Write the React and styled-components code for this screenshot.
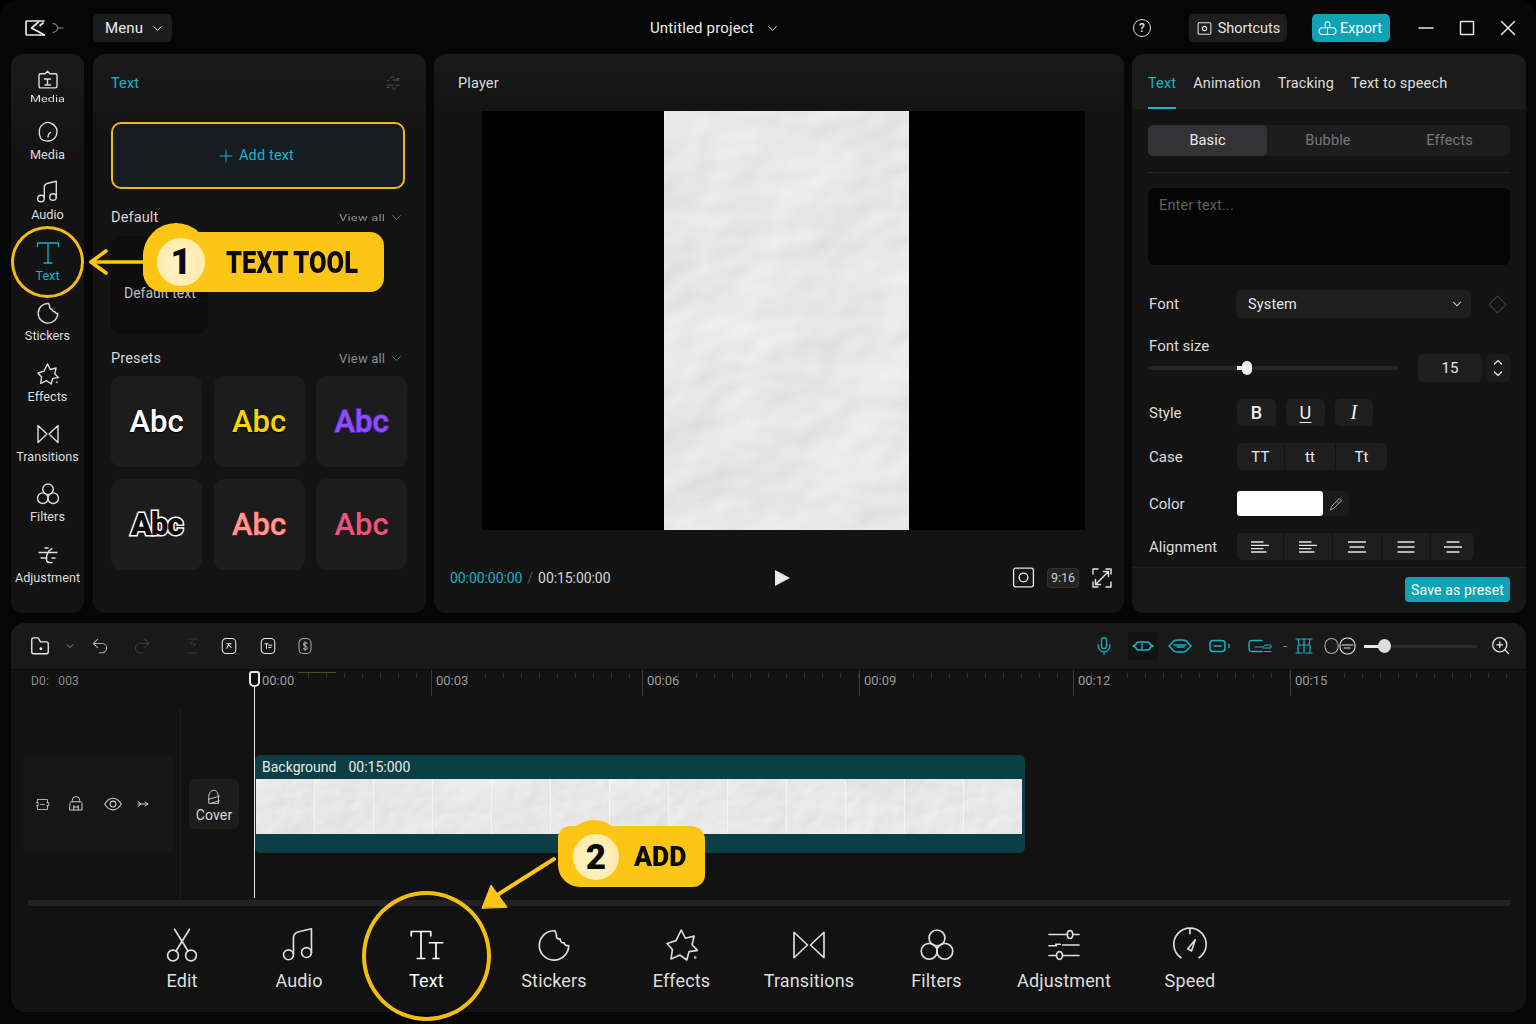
import { createGlobalStyle } from "styled-components";
import styled from "styled-components";
import { Mic, Undo2, Redo2 } from "lucide-react";

const GlobalStyle = createGlobalStyle`
  * { box-sizing: border-box; }
  html, body { margin: 0; padding: 0; background: #000; }
  body { font-family: Roboto, "Liberation Sans", sans-serif; color: #e6e6e6; }
`;

const CYAN = "#12b5c9";
const YELLOW = "#fdc615";

const Svg = ({ size = 24, w, h, color = "currentColor", sw = 1.6, vb = "0 0 24 24", children }) => (
  <svg
    width={w || size}
    height={h || size}
    viewBox={vb}
    fill="none"
    stroke={color}
    strokeWidth={sw}
    strokeLinecap="round"
    strokeLinejoin="round"
  >
    {children}
  </svg>
);

const icons = {
  folderTree: (
    <>
      <path d="M3 7.500c0-1 .7-1.700 1.700-1.700H9l2.500-2.500 2.500 2.500h5.300c1 0 1.700.7 1.700 1.700v10.700c0 1-.7 1.700-1.700 1.700H4.700c-1 0-1.700-.7-1.700-1.700z" />
      <path d="M8.500 11h6M11.500 11v6M9 17h5.500" />
    </>
  ),
  blob: (
    <>
      <path d="M9 3c2-1 4.500-.5 6.500.5 3 1.500 5.500 3.500 5.500 8 0 5-3 9.500-9 9.500-3 0-6-.5-7.500-3-1-2-1.500-5.500-1-8.500.4-2.500 3-5.200 5.500-6.500z" />
      <path d="M12 17c0-2 .6-3.500 2.500-4.500" />
    </>
  ),
  music: (
    <>
      <path d="M8.300 18V7.200c0-2 1.500-3.500 3.500-4l8.500-2v16" />
      <circle cx="5" cy="18.500" r="3.300" />
      <circle cx="17" cy="17" r="3.300" />
    </>
  ),
  serifT: (
    <>
      <path d="M1.500 5.500V2h21v3.500M12 2v20M8 22h8" />
    </>
  ),
  sticker: (
    <path d="M12.500 2.500a9.800 9.800 0 1 0 9.300 9.800c-1.500.5-2.800-.2-3-1.700-1.600.2-2.800-1-2.600-2.500-1.800.1-3-1-2.600-2.700-.1-.8-.3-1.900-1.100-2.900z" />
  ),
  star: (
    <>
      <path d="M11.500 2l2.800 5.500 5.800-1.500-1.400 5.800 3.600 3.800-5.600.8-1.500 5.600-4.500-3.300-6 2.600.9-6.300L2 11l6-1.900z" />
      <circle cx="20.800" cy="20.300" r=".3" />
    </>
  ),
  bowtie: <path d="M2 3.500v17l9-8.500zM22 3.500v17L13 12z" />,
  filters: (
    <>
      <circle cx="12" cy="7.300" r="5.300" />
      <circle cx="6.800" cy="16.200" r="5.300" />
      <circle cx="17.200" cy="16.200" r="5.300" />
    </>
  ),
  squiggle: (
    <path d="M3 9.500h18M5 15h6M16 5.500l-3 2.500c-2 3-3 6-2.500 9 .4 2 2.500 3 5.500 2.500M16 15h3M9 5h3" />
  ),
  scissors: (
    <>
      <circle cx="6" cy="19" r="3.600" />
      <circle cx="18" cy="19" r="3.600" />
      <path d="M8 16L17 1.500M16 16L7 1.500" />
    </>
  ),
  tt: (
    <>
      <path d="M1.500 6V3h13v3M8 3v18M5.500 21h5" />
      <path d="M13.500 10.500h9M18 10.500V21M16 21h4" />
    </>
  ),
  sliders: (
    <>
      <path d="M2 5h12.500M18 5h4M2 12.500h5M11 12h11M2 19h5M11 19h11" />
      <ellipse cx="16" cy="5" rx="1.800" ry="2.600" />
      <ellipse cx="9" cy="19" rx="2" ry="2.600" />
      <path d="M6.500 11.500l3 0" />
    </>
  ),
  gauge: (
    <>
      <path d="M6 20.500a10.800 10.800 0 1 1 12 0" />
      <path d="M12 1.500v3M10.500 14.500l5-6-2.500 7.500z" />
    </>
  ),
  chevron: <path d="M6 9l6 6 6-6" />,
};

const Icon = ({ name, size, color, sw }) => (
  <Svg size={size} color={color} sw={sw}>
    {icons[name]}
  </Svg>
);

const railItems = [
  { icon: "folderTree", label: "Media", squished: true },
  { icon: "blob", label: "Media" },
  { icon: "music", label: "Audio" },
  { icon: "serifT", label: "Text", active: true },
  { icon: "sticker", label: "Stickers" },
  { icon: "star", label: "Effects" },
  { icon: "bowtie", label: "Transitions" },
  { icon: "filters", label: "Filters" },
  { icon: "squiggle", label: "Adjustment" },
];

const presets = [
  { v: "white" },
  { v: "yellow" },
  { v: "purple" },
  { v: "outline" },
  { v: "salmon" },
  { v: "pink" },
];

const rulerMarks = [
  { w: 177, t: "00:00" },
  { w: 211, t: "00:03" },
  { w: 217, t: "00:06" },
  { w: 214, t: "00:09" },
  { w: 217, t: "00:12" },
  { w: 218, t: "00:15" },
];

const bottomTools = [
  { icon: "scissors", label: "Edit", ml: 0 },
  { icon: "music", label: "Audio", ml: -10.5 },
  { icon: "tt", label: "Text", ml: 0, strong: true },
  { icon: "sticker", label: "Stickers", ml: 0 },
  { icon: "star", label: "Effects", ml: 0 },
  { icon: "bowtie", label: "Transitions", ml: 0 },
  { icon: "filters", label: "Filters", ml: 0 },
  { icon: "sliders", label: "Adjustment", ml: 0 },
  { icon: "gauge", label: "Speed", ml: -1.5 },
];

const alignCells = [
  { w: 46, lines: [[0, 12], [0, 18], [0, 12], [0, 15]] },
  { w: 48, lines: [[0, 12], [0, 18], [0, 12], [0, 15]] },
  { w: 48, lines: [[0, 18], [2, 16], [0, 18]] },
  { w: 48, lines: [[1, 17], [1, 17], [1, 17]] },
  { w: 43, lines: [[3, 15], [0, 18], [3, 15]] },
];

const Paper = ({ seed, freq = "0.012", scale = 3 }) => (
  <PaperSvg width="100%" height="100%">
    <filter id={`paper-${seed}`} x="0" y="0" width="100%" height="100%" colorInterpolationFilters="sRGB">
      <feTurbulence type="fractalNoise" baseFrequency={freq} numOctaves="4" seed={seed} />
      <feDiffuseLighting surfaceScale={scale} lightingColor="#fafafa">
        <feDistantLight azimuth="50" elevation="68" />
      </feDiffuseLighting>
    </filter>
    <rect width="100%" height="100%" filter={`url(#paper-${seed})`} />
  </PaperSvg>
);

const App = () => {
  return (
    <Frame>
      <GlobalStyle />
      <TopBar>
        <TopLeft>
          <Svg w={22} h={18} vb="0 0 22 18" sw={1.700} color="#e8e8e8">
            <path d="M20 2H3c-.6 0-1 .4-1 1v12c0 .6.4 1 1 1h17" />
            <path d="M14.500 3L7.500 9l13 7M19 4l-3 2.500" />
          </Svg>
          <Svg w={12} h={12} vb="0 0 12 12" sw={1.200} color="#8a8a8a">
            <path d="M1 1.500c3 .5 4.500 2 5 4.500H11M6 6c-.5 2.500-2 4-5 4.500" />
          </Svg>
          <MenuButton>
            Menu
            <Icon name="chevron" size={15} />
          </MenuButton>
        </TopLeft>
        <ProjectTitle>
          Untitled project
          <Icon name="chevron" size={15} />
        </ProjectTitle>
        <TopRight>
          <HelpCircle>?</HelpCircle>
          <TopButton $ml={38} $w={98}>
            <Svg size={17} sw={1.500}>
              <path d="M6 4H4.500C3.500 4 3 4.500 3 5.500v13c0 1 .5 1.500 1.500 1.500H6M18 4h1.500c1 0 1.500.5 1.500 1.500v13c0 1-.5 1.500-1.500 1.500H18M6 4h12M6 20h12" />
              <circle cx="12" cy="12" r="3" />
            </Svg>
            Shortcuts
          </TopButton>
          <TopButton $ml={25} $w={78} $primary>
            <Svg size={19} sw={1.300} color="#fff">
              <path d="M9 11V6.500a3 3 0 0 1 6 0V11M12 11h6.500a3 3 0 0 1 0 8.500H12M12 11H5.500a3 3 0 0 0 0 8.500H12zM12 11v8.500" />
            </Svg>
            Export
          </TopButton>
          <WinIcon $ml={27}>
            <Svg w={18} h={18} vb="0 0 18 18" sw={1.500}><path d="M2 9h14" /></Svg>
          </WinIcon>
          <WinIcon $ml={23}>
            <Svg w={18} h={18} vb="0 0 18 18" sw={1.500}><rect x="2.500" y="2.500" width="13" height="13" rx=".5" /></Svg>
          </WinIcon>
          <WinIcon $ml={23}>
            <Svg w={18} h={18} vb="0 0 18 18" sw={1.500}><path d="M2.500 2.500l13 13M15.500 2.500l-13 13" /></Svg>
          </WinIcon>
        </TopRight>
      </TopBar>

      <MainRow>
        <Rail>
          {railItems.map((item, i) => (
            <RailItem key={i} $active={item.active} $squished={item.squished}>
              <Icon name={item.icon} size={24} sw={item.active ? 1.300 : 1.400} />
              <RailLabel $squished={item.squished}>{item.label}</RailLabel>
            </RailItem>
          ))}
        </Rail>

        <TextPanel>
          <PanelTitle>Text</PanelTitle>
          <CollapseIcon>
            <Svg size={18} sw={1} color="#666">
              <path d="M8 6l3-3 2 2M17 6h3M4 9h3M12 8h8M4 15h8M16 15h4M4 18h3M11 18l2 3 3-3" />
            </Svg>
          </CollapseIcon>
          <AddTextButton>
            <Svg size={18} sw={1.300}><path d="M12 4v16M4 12h16" /></Svg>
            Add text
          </AddTextButton>
          <SectionRow $mt={19}>
            <span>Default</span>
            <ViewAll>
              <SquishedText>View all</SquishedText>
              <Icon name="chevron" size={15} sw={1.200} />
            </ViewAll>
          </SectionRow>
          <DefaultCard>Default text</DefaultCard>
          <SectionRow $mt={15}>
            <span>Presets</span>
            <ViewAll>
              View all
              <Icon name="chevron" size={15} sw={1.200} />
            </ViewAll>
          </SectionRow>
          <PresetGrid>
            {presets.map((p) => (
              <PresetCard key={p.v}>
                <PresetText $v={p.v}>Abc</PresetText>
              </PresetCard>
            ))}
          </PresetGrid>
        </TextPanel>

        <PlayerPanel>
          <PlayerHeader>Player</PlayerHeader>
          <VideoStage>
            <PaperSheet>
              <Paper seed={7} freq="0.006 0.008" scale={4} />
            </PaperSheet>
          </VideoStage>
          <PlayerControls>
            <TimeGroup>
              <CurrentTime>00:00:00:00</CurrentTime>
              <TimeSlash>/</TimeSlash>
              <span>00:15:00:00</span>
            </TimeGroup>
            <PlayGlyph />
            <ControlIcons>
              <Svg size={25} sw={1.300} color="#e6e6e6">
                <rect x="2.500" y="3" width="19" height="18" rx="2" />
                <circle cx="12" cy="12" r="4.200" />
              </Svg>
              <RatioBadge>9:16</RatioBadge>
              <Svg size={24} sw={1.400} color="#e6e6e6">
                <path d="M3 8V3h5M16 3h5v5M21 16v5h-5M8 21H3v-5M6 18L18 6M13.500 5.500H18.500V10.500M5.500 13.500v5H10.500" />
              </Svg>
            </ControlIcons>
          </PlayerControls>
        </PlayerPanel>

        <SidePanel>
          <TabBar>
            <Tab $active>Text</Tab>
            <Tab>Animation</Tab>
            <Tab>Tracking</Tab>
            <Tab>Text to speech</Tab>
          </TabBar>
          <SideBody>
            <SegmentGroup>
              <Segment $w={119} $active>Basic</Segment>
              <Segment $w={122}>Bubble</Segment>
              <Segment $w={121}>Effects</Segment>
            </SegmentGroup>
            <Divider />
            <TextEntry>Enter text...</TextEntry>
            <FieldRow $mt={25} $h={28}>
              <FieldLabel>Font</FieldLabel>
              <SelectBox>
                System
                <Icon name="chevron" size={14} sw={1.800} />
              </SelectBox>
              <Diamond />
            </FieldRow>
            <FontSizeLabel>Font size</FontSizeLabel>
            <SliderRow>
              <SliderTrack>
                <SliderFill />
                <SliderThumb />
              </SliderTrack>
              <NumberBox>15</NumberBox>
              <Stepper>
                <Svg w={12} h={22} vb="0 0 12 22" sw={1.200}>
                  <path d="M2.500 7L6 3.500 9.500 7M2.500 15L6 18.500 9.500 15" />
                </Svg>
              </Stepper>
            </SliderRow>
            <FieldRow $mt={17} $h={27}>
              <FieldLabel>Style</FieldLabel>
              <StyleButtons>
                <StyleBtn $w={39} $b>B</StyleBtn>
                <StyleBtn $w={39} $u>U</StyleBtn>
                <StyleBtn $w={38} $i>I</StyleBtn>
              </StyleButtons>
            </FieldRow>
            <FieldRow $mt={17} $h={27}>
              <FieldLabel>Case</FieldLabel>
              <JoinedGroup>
                <JoinedCell $w={47}>TT</JoinedCell>
                <JoinedCell $w={50}>tt</JoinedCell>
                <JoinedCell $w={51}>Tt</JoinedCell>
              </JoinedGroup>
            </FieldRow>
            <FieldRow $mt={21} $h={25}>
              <FieldLabel>Color</FieldLabel>
              <Swatch />
              <PickerBtn>
                <Svg size={16} sw={1.300}>
                  <path d="M4 20l1-4 8-8 3 3-8 8zM13 8l2-3c1-1 3-1 4 0s1 3 0 4l-3 2" />
                </Svg>
              </PickerBtn>
            </FieldRow>
            <FieldRow $mt={17} $h={27}>
              <FieldLabel>Alignment</FieldLabel>
              <JoinedGroup>
                {alignCells.map((cell, i) => (
                  <JoinedCell key={i} $w={cell.w}>
                    <Svg w={18} h={14} vb="0 0 18 14" sw={1.300}>
                      {cell.lines.map(([a, b], j) => (
                        <path key={j} d={`M${a} ${2 + (j * 10) / (cell.lines.length - 1)}H${b}`} />
                      ))}
                    </Svg>
                  </JoinedCell>
                ))}
              </JoinedGroup>
            </FieldRow>
          </SideBody>
          <SideFooter>
            <SavePreset>Save as preset</SavePreset>
          </SideFooter>
        </SidePanel>
      </MainRow>

      <TimelinePanel>
        <TimelineToolbar>
          <ToolGroup>
            <ToolSlot $ml={18}>
              <Svg size={22} sw={1.500} color="#e8e8e8">
                <path d="M3 5c0-1 .6-1.800 1.700-1.800H9c1 0 1.500.6 2 1.500l1.500 2.800H19c1.200 0 2 .8 2 2v9c0 1.200-.8 2-2 2H5c-1.200 0-2-.8-2-2z" />
                <circle cx="13" cy="15" r=".8" />
              </Svg>
            </ToolSlot>
            <ToolSlot $ml={13} $dim>
              <Icon name="chevron" size={12} sw={1.600} />
            </ToolSlot>
            <ToolSlot $ml={14} $dim>
              <Undo2 size={20} strokeWidth={1.300} />
            </ToolSlot>
            <ToolSlot $ml={22} $faint>
              <Redo2 size={20} strokeWidth={1.300} />
            </ToolSlot>
            <ToolSlot $ml={34} $faint>
              <Svg w={14} h={20} vb="0 0 14 20" sw={1}>
                <path d="M3 3h8M7 5l-3 3h6l-3 3M3 17h8" />
              </Svg>
            </ToolSlot>
            <ToolSlot $ml={20}>
              <Svg size={18} sw={1.400}>
                <rect x="3" y="2" width="18" height="20" rx="5" />
                <path d="M9 9h6M12 9l-3 6M12 11l3 3" />
              </Svg>
            </ToolSlot>
            <ToolSlot $ml={21}>
              <Svg size={18} sw={1.400}>
                <rect x="3" y="2" width="18" height="20" rx="5" />
                <path d="M8 9h4M10 9v6M13 11h4M13 14h3" />
              </Svg>
            </ToolSlot>
            <ToolSlot $ml={19} $dim>
              <Svg size={18} sw={1.400}>
                <rect x="4" y="2" width="16" height="20" rx="6" />
                <path d="M15 9c-1-2-5-2-5 .5s5 2 5 5-4 2.500-5 .5M12 6v12" />
              </Svg>
            </ToolSlot>
          </ToolGroup>
          <ToolGroup>
            <ToolSlot $cyan>
              <Mic size={20} strokeWidth={1.500} />
            </ToolSlot>
            <ActiveTool $ml={14}>
              <Svg w={22} h={12} vb="0 0 22 12" sw={1.400} color={CYAN}>
                <path d="M1 6l3-1.500c0-1.500 1-2.500 3-2.500h8c2 0 3 1 3 2.500L21 6l-3 1.500c0 1.500-1 2.500-3 2.500H7c-2 0-3-1-3-2.500zM10 3.500v5" />
              </Svg>
            </ActiveTool>
            <ToolSlot $ml={10} $cyan>
              <Svg w={24} h={14} vb="0 0 24 14" sw={1.500}>
                <path d="M1 7c1-1 2-2 3-3 1-2 3-3 6-3h4c3 0 5 1 6 3 1 1 2 2 3 3-1 1-2 2-3 3-1 2-3 3-6 3h-4c-3 0-5-1-6-3-1-1-2-2-3-3zM6 6h12M9 8h7" />
              </Svg>
            </ToolSlot>
            <ToolSlot $ml={17} $cyan>
              <Svg w={22} h={14} vb="0 0 22 14" sw={1.500}>
                <rect x="1" y="1.500" width="15" height="11" rx="3" />
                <path d="M5 7h7M20 5.500v3" />
              </Svg>
            </ToolSlot>
            <ToolSlot $ml={17} $cyan>
              <Svg w={26} h={14} vb="0 0 26 14" sw={1.400}>
                <path d="M14 1.500H4a3 3 0 0 0-3 3v5a3 3 0 0 0 3 3h10" />
                <path d="M7 8h8l2-2h6v3h-8M16 12.500h7" strokeWidth="1" />
              </Svg>
            </ToolSlot>
            <ToolSlot $ml={9} $cyan>
              <Svg w={4} h={4} vb="0 0 4 4" sw={1.200}><path d="M0 2.500h4" /></Svg>
            </ToolSlot>
            <ToolSlot $ml={8} $cyan>
              <Svg w={18} h={18} vb="0 0 18 18" sw={1.200}>
                <path d="M1 2h16M3 2l1 6h10l1-6M9 2v14M1 16h6M11 16h6M3 8v8M15 8v8" />
              </Svg>
            </ToolSlot>
            <ToolSlot $ml={11} $dim>
              <Svg w={32} h={18} vb="0 0 32 18" sw={1.100}>
                <rect x="1" y="1.500" width="13" height="15" rx="6.500" />
                <rect x="16" y="1" width="15" height="16" rx="7" stroke="#e8e8e8" />
                <path d="M18 8h11M20 11h6" stroke="#e8e8e8" />
              </Svg>
            </ToolSlot>
            <ZoomTrack>
              <ZoomFill />
              <ZoomThumb />
            </ZoomTrack>
            <ToolSlot $ml={14}>
              <Svg size={20} sw={1.500}>
                <circle cx="10.500" cy="10.500" r="8.500" />
                <path d="M10.500 7v7M7 10.500h7M17 17l4 4" />
              </Svg>
            </ToolSlot>
          </ToolGroup>
        </TimelineToolbar>

        <Ruler>
          <RulerLead>D0: &nbsp;&nbsp;003</RulerLead>
          {rulerMarks.map((m, i) => (
            <RulerMark key={m.t} $w={m.w} $first={i === 0}>
              {i === 0 && <RulerAmber />}
              {m.t}
            </RulerMark>
          ))}
        </Ruler>

        <TrackBody>
          <TrackHead>
            <Svg size={15} sw={1.300}><path d="M4 4h16v5M4 4v5M4 14v6h16v-6M2 9h3v5H2M19 9h3v5h-3M9 12h6" /></Svg>
            <Svg size={18} sw={1.300}><path d="M7 9V7a5 5 0 0 1 10 0v2M4 11c0-1 1-2 2-2h12c1 0 2 1 2 2v9H4zM9 14v6M15 14v6M9 16h6" /></Svg>
            <Svg size={20} sw={1.300}><path d="M2 12c3-5 6-7 10-7s7 2 10 7c-3 5-6 7-10 7s-7-2-10-7z" /><circle cx="12" cy="12" r="3.500" /></Svg>
            <Svg w={12} h={10} vb="0 0 12 10" sw={1}><path d="M1 5h10M1 2.500l3 2.500-3 2.500M8 3l3 2-3 2" /></Svg>
          </TrackHead>
          <CoverButton>
            <Svg size={18} sw={1.200}>
              <path d="M5 20V11c0-4 3-8 7-8 2 0 3 1 4 2l2 6v9zM5 15l14-4M9 20l10-3" />
            </Svg>
            Cover
          </CoverButton>
          <Clip>
            <ClipLabel>
              <span>Background</span>
              <span>00:15:000</span>
            </ClipLabel>
            <FilmStrip>
              {Array.from({ length: 13 }, (_, i) => (
                <FilmFrame key={i}>
                  <Paper seed={20 + i} freq="0.014 0.016" scale={1.500} />
                </FilmFrame>
              ))}
            </FilmStrip>
          </Clip>
          <Playhead>
            <PlayheadCap />
          </Playhead>
        </TrackBody>

        <ScrollStrip />

        <BottomTools>
          {bottomTools.map((tool) => (
            <BottomTool key={tool.label} $ml={tool.ml} $strong={tool.strong}>
              <Icon name={tool.icon} size={36} sw={1.100} />
              <span>{tool.label}</span>
            </BottomTool>
          ))}
        </BottomTools>
      </TimelinePanel>

      <RingTextTool />
      <ArrowOne>
        <Svg w={60} h={30} vb="0 0 60 30" sw={3.600} color={YELLOW}>
          <path d="M4 15h56" />
          <path d="M19 4L4 15l15 11" />
        </Svg>
      </ArrowOne>
      <CalloutOne>
        <BumpOne />
        <BadgeOne>1</BadgeOne>
        <CalloutText $size={31} $sx={0.82}>TEXT TOOL</CalloutText>
      </CalloutOne>

      <RingAdd />
      <ArrowTwo>
        <Svg w={80} h={58} vb="0 0 80 58" sw={4} color={YELLOW}>
          <path d="M16 42L76 4" />
          <path d="M4 53l9-23 16 22z" fill={YELLOW} strokeWidth="1" />
        </Svg>
      </ArrowTwo>
      <CalloutTwo>
        <BumpTwo />
        <BadgeTwo>2</BadgeTwo>
        <CalloutText $size={28} $sx={0.95}>ADD</CalloutText>
      </CalloutTwo>
    </Frame>
  );
};

export default App;

const Frame = styled.div`
  position: relative;
  width: 1536px;
  height: 1024px;
  overflow: hidden;
  background: #060606;
  border-radius: 16px 16px 0 0;
  font-size: 14.500px;
  letter-spacing: 0.01em;
`;

const TopBar = styled.div`
  height: 54px;
  padding-top: 2px;
  display: flex;
  align-items: center;
`;

const TopLeft = styled.div`
  width: 650px;
  display: flex;
  align-items: center;
  padding-left: 24px;
  gap: 6px;
`;

const MenuButton = styled.div`
  margin-left: 23px;
  width: 79px;
  height: 28px;
  background: #1c1c1c;
  border-radius: 5px;
  display: flex;
  align-items: center;
  justify-content: space-between;
  padding: 0 7px 0 12px;
  font-size: 15px;
  color: #ececec;
`;

const ProjectTitle = styled.div`
  display: flex;
  align-items: center;
  gap: 11px;
  font-size: 15px;
  color: #ececec;
`;

const TopRight = styled.div`
  margin-left: auto;
  padding-right: 19px;
  display: flex;
  align-items: center;
`;

const HelpCircle = styled.div`
  width: 18px;
  height: 18px;
  border: 1.500px solid #ddd;
  border-radius: 50%;
  display: flex;
  align-items: center;
  justify-content: center;
  font-size: 12px;
  font-weight: 500;
`;

const TopButton = styled.div`
  margin-left: ${(p) => p.$ml}px;
  width: ${(p) => p.$w}px;
  height: 28px;
  padding-right: ${(p) => (p.$primary ? 2 : 0)}px;
  border-radius: 5px;
  background: ${(p) => (p.$primary ? "#0fa3b5" : "#1e1e1e")};
  color: ${(p) => (p.$primary ? "#fff" : "#e4e4e4")};
  display: flex;
  align-items: center;
  justify-content: center;
  gap: ${(p) => (p.$primary ? 3 : 5)}px;
  font-size: 14.500px;
  letter-spacing: 0;
`;

const WinIcon = styled.div`
  margin-left: ${(p) => p.$ml}px;
  width: 18px;
  height: 18px;
  color: #e4e4e4;
`;

const MainRow = styled.div`
  height: 559px;
  display: flex;
  padding-left: 11px;
`;

const panelBg = "#131314";

const Rail = styled.div`
  width: 73px;
  margin-right: 9px;
  padding-top: 14px;
  background: linear-gradient(#1a1a1b, ${panelBg} 18%);
  border-radius: 12px;
`;

const RailItem = styled.div`
  height: ${(p) => (p.$squished ? 52 : 60.400)}px;
  display: flex;
  flex-direction: column;
  align-items: center;
  gap: ${(p) => (p.$squished ? 0 : 4)}px;
  color: ${(p) => (p.$active ? CYAN : "#dcdcdc")};
`;

const RailLabel = styled.div`
  font-size: 12.700px;
  letter-spacing: 0;
  line-height: 14px;
  white-space: nowrap;
  transform: ${(p) => (p.$squished ? "scaleY(0.7)" : "none")};
`;

const TextPanel = styled.div`
  position: relative;
  width: 333px;
  margin-right: 8px;
  padding: 0 20px 0 18px;
  background: linear-gradient(#1a1a1b, ${panelBg} 14%);
  border-radius: 12px;
`;

const PanelTitle = styled.div`
  height: 68px;
  display: flex;
  align-items: center;
  padding-bottom: 10px;
  color: ${CYAN};
`;

const CollapseIcon = styled.div`
  position: absolute;
  top: 20px;
  right: 24px;
`;

const AddTextButton = styled.div`
  width: 294px;
  height: 67px;
  padding-right: 5px;
  border: 2px solid #f0b90f;
  border-radius: 10px;
  background: #171c21;
  color: ${CYAN};
  display: flex;
  align-items: center;
  justify-content: center;
  gap: 4px;
`;

const SectionRow = styled.div`
  margin-top: ${(p) => p.$mt}px;
  height: 18px;
  padding-right: 2px;
  display: flex;
  justify-content: space-between;
  align-items: center;
  color: #d6d6d6;
`;

const ViewAll = styled.div`
  display: flex;
  align-items: center;
  gap: 4px;
  font-size: 13px;
  color: #8c8c8c;
`;

const SquishedText = styled.span`
  display: inline-block;
  transform: scaleY(0.75);
`;

const DefaultCard = styled.div`
  margin-top: 10px;
  width: 97px;
  height: 98px;
  background: #0d0d0e;
  border-radius: 10px;
  padding: 49px 0 0 13px;
  white-space: nowrap;
  font-size: 14px;
  letter-spacing: 0;
  color: #bdbdbd;
`;

const PresetGrid = styled.div`
  margin-top: 9px;
  display: grid;
  grid-template-columns: repeat(3, 91px);
  grid-auto-rows: 91px;
  column-gap: 11.500px;
  row-gap: 12px;
`;

const PresetCard = styled.div`
  background: #1c1c1d;
  border-radius: 10px;
  display: flex;
  align-items: center;
  justify-content: center;
`;

const presetStyles = {
  white: `color:#fff; text-shadow: 0 1px 2px #000;`,
  yellow: `color:#f8d404; text-shadow: 0 1px 2px #000;`,
  purple: `color:#8d4ff5; -webkit-text-stroke: 1.500px #5a26d6; paint-order: stroke fill;`,
  outline: `color:#0c0c0c; font-weight:900; letter-spacing:-1px; -webkit-text-stroke: 3px #fff; paint-order: stroke fill;`,
  salmon: `color:#ff9a90; -webkit-text-stroke: 1px #c81e1e; paint-order: stroke fill;`,
  pink: `color:#f0527f;`,
};

const PresetText = styled.span`
  font-size: 31px;
  font-weight: 500;
  letter-spacing: 0;
  ${(p) => presetStyles[p.$v]}
`;

const PlayerPanel = styled.div`
  width: 690px;
  margin-right: 8px;
  background: linear-gradient(#1a1a1b, ${panelBg} 10%);
  border-radius: 12px;
  display: flex;
  flex-direction: column;
`;

const PlayerHeader = styled.div`
  height: 57px;
  padding: 2px 0 0 24px;
  display: flex;
  align-items: center;
  color: #dcdcdc;
`;

const VideoStage = styled.div`
  margin-left: 48px;
  width: 603px;
  height: 419px;
  background: #000;
  padding-left: 182px;
`;

const PaperSheet = styled.div`
  width: 245px;
  height: 100%;
`;

const PaperSvg = styled.svg`
  display: block;
`;

const PlayerControls = styled.div`
  flex: 1;
  display: grid;
  grid-template-columns: 1fr auto 1fr;
  align-items: center;
  padding: 12px 10px 0 16px;
`;

const TimeGroup = styled.div`
  display: flex;
  gap: 5px;
  font-size: 14px;
  letter-spacing: -0.005em;
  color: #d8d8d8;
`;

const CurrentTime = styled.span`
  color: ${CYAN};
`;

const TimeSlash = styled.span`
  color: #555;
`;

const PlayGlyph = styled.div`
  width: 0;
  height: 0;
  border-style: solid;
  border-width: 8px 0 8px 15px;
  border-color: transparent transparent transparent #e8e8e8;
`;

const ControlIcons = styled.div`
  justify-self: end;
  display: flex;
  align-items: center;
  gap: 11px;
`;

const RatioBadge = styled.div`
  width: 32px;
  height: 20px;
  border-radius: 4px;
  background: #222;
  border: 1px solid #333;
  font-size: 12.500px;
  letter-spacing: 0;
  color: #cfcfcf;
  display: flex;
  align-items: center;
  justify-content: center;
`;

const SidePanel = styled.div`
  width: 394px;
  background: ${panelBg};
  border-radius: 12px;
  display: flex;
  flex-direction: column;
  overflow: hidden;
`;

const TabBar = styled.div`
  height: 55px;
  padding-left: 16px;
  display: flex;
  gap: 17px;
  background: #1b1b1c;
`;

const Tab = styled.div`
  display: flex;
  align-items: center;
  padding-top: 5px;
  color: ${(p) => (p.$active ? CYAN : "#dedede")};
  border-bottom: 2px solid ${(p) => (p.$active ? CYAN : "transparent")};
`;

const SideBody = styled.div`
  padding: 16px 16px 0;
`;

const SegmentGroup = styled.div`
  height: 31px;
  display: flex;
  background: #1d1d1e;
  border-radius: 6px;
`;

const Segment = styled.div`
  width: ${(p) => p.$w}px;
  display: flex;
  align-items: center;
  justify-content: center;
  border-radius: 5px;
  background: ${(p) => (p.$active ? "#333335" : "transparent")};
  color: ${(p) => (p.$active ? "#ececec" : "#777")};
`;

const Divider = styled.div`
  height: 1px;
  margin-top: 16px;
  background: #262627;
`;

const TextEntry = styled.div`
  margin-top: 15px;
  height: 77px;
  padding: 9px 11px;
  background: #050506;
  border-radius: 6px;
  color: #5f5f5f;
`;

const FieldRow = styled.div`
  margin-top: ${(p) => p.$mt}px;
  height: ${(p) => p.$h}px;
  display: flex;
  align-items: center;
`;

const FieldLabel = styled.div`
  width: 89px;
  flex: none;
  padding-left: 1px;
  font-size: 15px;
  letter-spacing: 0;
  color: #dcdcdc;
`;

const SelectBox = styled.div`
  width: 235px;
  height: 100%;
  margin-left: -1px;
  border-radius: 5px;
  background: #1e1e1f;
  display: flex;
  align-items: center;
  justify-content: space-between;
  padding: 0 7px 0 12px;
  color: #e6e6e6;
`;

const Diamond = styled.div`
  margin-left: 20px;
  width: 13px;
  height: 13px;
  border: 1px solid #3f3f3f;
  transform: rotate(45deg);
`;

const FontSizeLabel = styled.div`
  margin-top: 20px;
  height: 16px;
  padding-left: 1px;
  line-height: 16px;
  font-size: 15px;
  letter-spacing: 0;
  color: #dcdcdc;
`;

const SliderRow = styled.div`
  height: 28px;
  display: flex;
  align-items: center;
`;

const SliderTrack = styled.div`
  position: relative;
  width: 250px;
  height: 4px;
  border-radius: 2px;
  background: #262627;
`;

const SliderFill = styled.div`
  position: absolute;
  left: 89px;
  width: 10px;
  height: 100%;
  background: #e8e8e8;
`;

const SliderThumb = styled.div`
  position: absolute;
  left: 94px;
  top: -5px;
  width: 10px;
  height: 14px;
  border-radius: 5px;
  background: #f0f0f0;
`;

const NumberBox = styled.div`
  margin-left: 20px;
  width: 64px;
  height: 100%;
  border-radius: 5px;
  background: #1e1e1f;
  display: flex;
  align-items: center;
  justify-content: center;
  font-size: 15px;
`;

const Stepper = styled.div`
  margin-left: 4px;
  width: 24px;
  height: 100%;
  border-radius: 5px;
  background: #1b1b1c;
  display: flex;
  align-items: center;
  justify-content: center;
`;

const StyleButtons = styled.div`
  display: flex;
  gap: 10px;
  height: 100%;
`;

const StyleBtn = styled.div`
  width: ${(p) => p.$w}px;
  border-radius: 5px;
  background: #1e1e1f;
  display: flex;
  align-items: center;
  justify-content: center;
  font-family: ${(p) => (p.$i ? '"Liberation Serif", serif' : "inherit")};
  font-size: ${(p) => (p.$i ? 20 : 18)}px;
  font-weight: ${(p) => (p.$b ? 500 : 400)};
  font-style: ${(p) => (p.$i ? "italic" : "normal")};
  text-decoration: ${(p) => (p.$u ? "underline" : "none")};
  text-underline-offset: 3px;
  color: #efefef;
`;

const JoinedGroup = styled.div`
  display: flex;
  height: 100%;
  gap: 1px;
`;

const JoinedCell = styled.div`
  width: ${(p) => p.$w}px;
  background: #1e1e1f;
  display: flex;
  align-items: center;
  justify-content: center;
  font-size: 15px;
  color: #e6e6e6;
  &:first-child {
    border-radius: 5px 0 0 5px;
  }
  &:last-child {
    border-radius: 0 5px 5px 0;
  }
`;

const Swatch = styled.div`
  width: 86px;
  height: 100%;
  background: #fff;
  border-radius: 3px;
`;

const PickerBtn = styled.div`
  width: 26px;
  height: 100%;
  background: #1a1a1b;
  border-radius: 0 5px 5px 0;
  display: flex;
  align-items: center;
  justify-content: center;
  color: #bbb;
`;

const SideFooter = styled.div`
  margin-top: auto;
  height: 46px;
  padding: 9px 16px 0 0;
  display: flex;
  justify-content: flex-end;
  background: #171718;
  border-top: 1px solid #1d1d1e;
`;

const SavePreset = styled.div`
  width: 105px;
  height: 25px;
  border-radius: 4px;
  background: #0fa3b5;
  color: #fff;
  display: flex;
  align-items: center;
  justify-content: center;
  font-size: 14px;
`;

const TimelinePanel = styled.div`
  position: relative;
  margin: 10px 10px 0 11px;
  height: 389px;
  border-radius: 14px;
  background: #121213;
  overflow: hidden;
`;

const TimelineToolbar = styled.div`
  height: 47px;
  display: flex;
  justify-content: space-between;
  align-items: center;
  padding-right: 15px;
  background: #19191a;
  border-bottom: 1px solid #0b0b0b;
`;

const ToolGroup = styled.div`
  display: flex;
  align-items: center;
`;

const ToolSlot = styled.div`
  display: flex;
  align-items: center;
  margin-left: ${(p) => p.$ml || 0}px;
  color: ${(p) => (p.$cyan ? CYAN : p.$dim ? "#a8a8a8" : p.$faint ? "#3a3a3a" : "#e8e8e8")};
`;

const ActiveTool = styled.div`
  margin-left: ${(p) => p.$ml}px;
  width: 30px;
  height: 28px;
  border-radius: 4px;
  background: #111213;
  display: flex;
  align-items: center;
  justify-content: center;
`;

const ZoomTrack = styled.div`
  position: relative;
  margin-left: 8px;
  width: 113px;
  height: 3px;
  background: #2b2b2c;
  border-radius: 2px;
`;

const ZoomFill = styled.div`
  width: 20px;
  height: 100%;
  background: #e8e8e8;
`;

const ZoomThumb = styled.div`
  position: absolute;
  left: 14px;
  top: -6px;
  width: 13px;
  height: 14px;
  border-radius: 50%;
  background: #dcdcdc;
`;

const Ruler = styled.div`
  height: 26px;
  display: flex;
`;

const RulerLead = styled.div`
  width: 243px;
  padding: 4px 0 0 20px;
  font-size: 12px;
  color: #8a8a8a;
`;

const RulerMark = styled.div`
  position: relative;
  width: ${(p) => p.$w}px;
  padding: 3px 0 0 ${(p) => (p.$first ? 7 : 4)}px;
  font-size: 13px;
  letter-spacing: 0;
  color: #9a9a9a;
  border-left: 1px solid ${(p) => (p.$first ? "transparent" : "#3a3a3a")};
  background: repeating-linear-gradient(
      90deg,
      transparent 0 17px,
      #303030 17px 18px
    )
    0 3px / 100% 5px no-repeat;
`;

const RulerAmber = styled.div`
  position: absolute;
  left: 43px;
  top: 2px;
  width: 38px;
  height: 1px;
  background: #5a4514;
`;

const TrackBody = styled.div`
  position: relative;
  height: 204px;
  padding: 59px 0 0 12px;
  display: flex;
  align-items: flex-start;
  &::before {
    content: "";
    position: absolute;
    left: 169px;
    top: 12px;
    bottom: 0;
    width: 1px;
    background: #1c1c1d;
  }
`;

const TrackHead = styled.div`
  width: 150px;
  height: 98px;
  background: #161617;
  border-radius: 4px;
  display: grid;
  grid-template-columns: 38px 30px 44px 16px;
  align-items: center;
  justify-items: center;
  color: #cfcfcf;
`;

const CoverButton = styled.div`
  margin: 24px 16px 0;
  width: 50px;
  height: 50px;
  padding-top: 2px;
  border-radius: 6px;
  background: #1c1c1d;
  display: flex;
  flex-direction: column;
  align-items: center;
  justify-content: center;
  gap: 1px;
  font-size: 14px;
  color: #dadada;
`;

const Clip = styled.div`
  width: 770px;
  height: 98px;
  background: #0a3f45;
  border-radius: 6px;
  padding: 0 3px 0 1px;
`;

const ClipLabel = styled.div`
  height: 24px;
  padding-left: 6px;
  display: flex;
  align-items: center;
  gap: 12px;
  font-size: 14px;
  letter-spacing: 0;
  color: #ececec;
`;

const FilmStrip = styled.div`
  height: 55px;
  display: flex;
  gap: 1px;
  background: #f4f4f4;
`;

const FilmFrame = styled.div`
  flex: 1;
  height: 100%;
`;

const Playhead = styled.div`
  position: absolute;
  left: 243px;
  top: -25px;
  bottom: 2px;
  width: 1px;
  background: #e8e8e8;
`;

const PlayheadCap = styled.div`
  position: absolute;
  top: 0;
  left: -5px;
  width: 11px;
  height: 16px;
  background: #0d0d0d;
  border: 2px solid #e8e8e8;
  border-radius: 3px 3px 5px 5px;
`;

const ScrollStrip = styled.div`
  height: 6px;
  margin: 0 16px 0 17px;
  background: #222223;
`;

const BottomTools = styled.div`
  height: 106px;
  display: flex;
  padding-left: 107.250px;
`;

const BottomTool = styled.div`
  width: 127.500px;
  margin-left: ${(p) => p.$ml}px;
  padding-top: 21px;
  display: flex;
  flex-direction: column;
  align-items: center;
  gap: 7px;
  font-size: 18px;
  color: ${(p) => (p.$strong ? "#fff" : "#dedede")};
`;

const RingTextTool = styled.div`
  position: absolute;
  left: 11px;
  top: 226px;
  width: 73px;
  height: 72px;
  border: 3.500px solid #f2bc10;
  border-radius: 50%;
`;

const ArrowOne = styled.div`
  position: absolute;
  left: 87px;
  top: 247px;
  line-height: 0;
`;

const CalloutOne = styled.div`
  position: absolute;
  left: 143px;
  top: 232px;
  width: 241px;
  height: 60px;
  background: ${YELLOW};
  border-radius: 24px 14px 14px 20px;
  padding-left: 83px;
  display: flex;
  align-items: center;
  color: #0b0b0b;
`;

const BumpOne = styled.div`
  position: absolute;
  left: 0;
  top: -9px;
  width: 66px;
  height: 69px;
  background: ${YELLOW};
  border-radius: 33px 33px 20px 22px;
`;

const BadgeOne = styled.div`
  position: absolute;
  left: 14px;
  top: 6px;
  width: 48px;
  height: 48px;
  border-radius: 50%;
  background: radial-gradient(circle at 45% 55%, #fff2c6, #fde8a2);
  display: flex;
  align-items: center;
  justify-content: center;
  font-size: 36px;
  font-weight: 900;
  letter-spacing: 0;
`;

const CalloutText = styled.div`
  font-size: ${(p) => p.$size}px;
  font-weight: 900;
  letter-spacing: 0;
  white-space: nowrap;
  transform: scaleX(${(p) => p.$sx});
  transform-origin: left center;
`;

const RingAdd = styled.div`
  position: absolute;
  left: 362px;
  top: 891px;
  width: 129px;
  height: 130px;
  border: 4px solid #f2bc10;
  border-radius: 50%;
`;

const ArrowTwo = styled.div`
  position: absolute;
  left: 478px;
  top: 855px;
  line-height: 0;
`;

const CalloutTwo = styled.div`
  position: absolute;
  left: 558px;
  top: 826px;
  width: 147px;
  height: 61px;
  background: ${YELLOW};
  border-radius: 12px 14px 12px 22px;
  padding-left: 76px;
  display: flex;
  align-items: center;
  color: #0b0b0b;
`;

const BumpTwo = styled.div`
  position: absolute;
  left: 6px;
  top: -6px;
  width: 60px;
  height: 40px;
  background: ${YELLOW};
  border-radius: 30px 30px 0 0;
`;

const BadgeTwo = styled.div`
  position: absolute;
  left: 15px;
  top: 8px;
  width: 46px;
  height: 46px;
  border-radius: 50%;
  background: radial-gradient(circle at 45% 55%, #fff2c6, #fde8a2);
  display: flex;
  align-items: center;
  justify-content: center;
  font-size: 35px;
  font-weight: 900;
  letter-spacing: 0;
`;
